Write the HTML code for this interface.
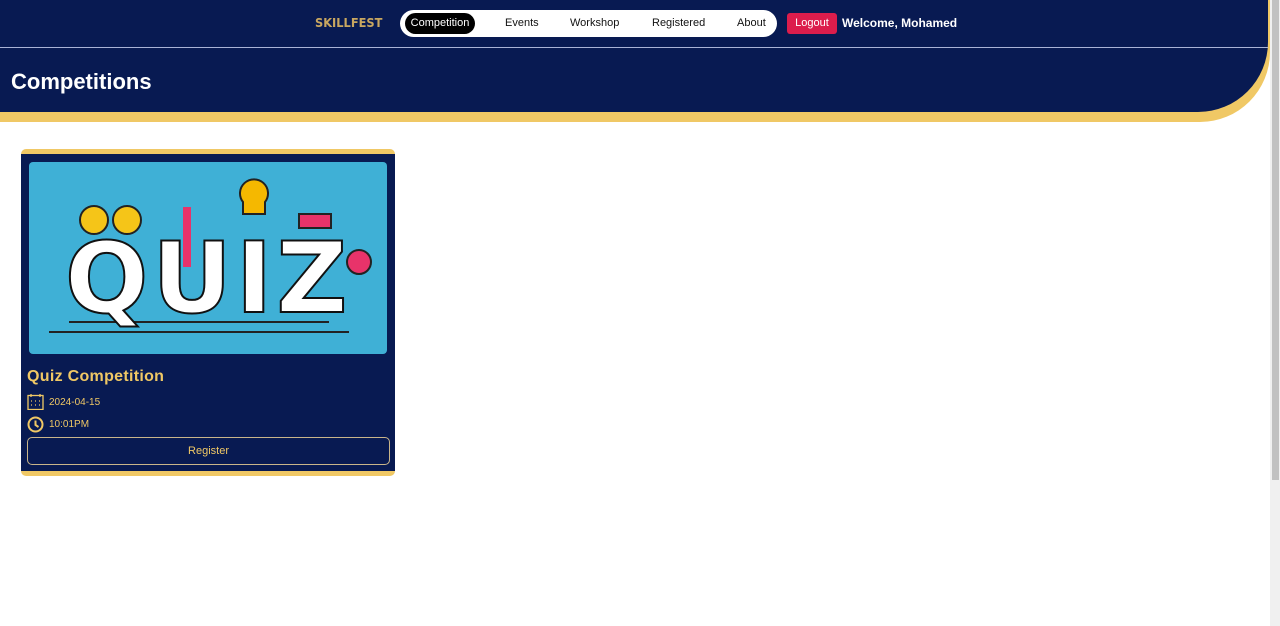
<!DOCTYPE html>
<html><head><meta charset="utf-8"><style>
*{margin:0;padding:0;box-sizing:border-box}
body{width:1280px;height:626px;overflow:hidden;background:#fff;font-family:"Liberation Sans",sans-serif;position:relative}
.scroll{position:absolute;right:0;top:0;width:10px;height:626px;background:#f0f0f0}
.scroll .th{position:absolute;left:2px;top:0;width:7px;height:480px;background:#c1c1c1}
.gold{position:absolute;left:0;top:0;width:1270px;height:122px;background:#f0c865;border-bottom-right-radius:70px}
.hdr{position:absolute;left:0;top:0;width:1268px;height:112px;background:#081a52;border-bottom-right-radius:70px}
.line{position:absolute;left:0;top:47px;width:1268px;height:1px;background:#a9b3d6}
.logo{position:absolute;left:315px;top:16px;color:#c9a760;font-weight:bold;font-size:12px;letter-spacing:0;font-family:"DejaVu Sans",sans-serif;transform:scaleX(0.95);transform-origin:left}
.nav{position:absolute;left:400px;top:10px;width:377px;height:27px;background:#fff;border-radius:14px}
.nav span{position:absolute;top:0;line-height:27px;font-size:11px;color:#111}
.nav .act{left:5px;top:3px;height:21px;width:70px;background:#000;color:#fff;border-radius:11px;text-align:center;line-height:21px;padding:0}
.logout{position:absolute;left:787px;top:13px;width:50px;height:21px;background:#dc1d4c;color:#fff;font-size:11px;border-radius:3px;text-align:center;line-height:21px}
.wel{position:absolute;left:842px;top:16px;color:#fff;font-weight:bold;font-size:12px;line-height:15px}
h1{position:absolute;left:11px;top:68px;color:#fff;font-size:22px;font-weight:bold;line-height:28px}
.card{position:absolute;left:21px;top:149px;width:374px;height:327px;background:#f0c865;border-radius:5px}
.ci{position:absolute;left:0;top:5px;width:374px;height:317px;background:#081a52}
.img{position:absolute;left:8px;top:8px;width:358px;height:192px;background:#3fb0d6;border-radius:4px;overflow:hidden}
.quiz{position:absolute;left:36px;top:60px;font-size:98px;font-weight:bold;color:#fff;font-family:"DejaVu Sans",sans-serif;letter-spacing:4px;-webkit-text-stroke:2px #111}
.title{position:absolute;left:6px;top:214px;color:#f0c865;font-size:16px;font-weight:bold;letter-spacing:0.3px}
.d{position:absolute;left:28px;color:#f0c865;font-size:10px}
.reg{position:absolute;left:6px;top:283px;width:363px;height:28px;border:1px solid #c9b58a;border-radius:5px;color:#f0c865;font-size:11px;text-align:center;line-height:26px}
</style></head><body>
<div class="gold"></div><div class="hdr"></div><div class="line"></div>
<div class="logo">SKILLFEST</div>
<div class="nav"><span class="act">Competition</span><span style="left:105px">Events</span><span style="left:170px">Workshop</span><span style="left:252px">Registered</span><span style="left:337px">About</span></div>
<div class="logout">Logout</div>
<div class="wel">Welcome, Mohamed</div>
<h1>Competitions</h1>
<div class="card"><div class="ci">
<div class="img">
<svg width="358" height="192" style="position:absolute;left:0;top:0" fill="none" stroke="#222" stroke-width="2">
<circle cx="65" cy="58" r="14" fill="#f5c518"/><circle cx="98" cy="58" r="14" fill="#f5c518"/>
<path d="M214 40a14 14 0 1 1 22 0v12h-22z" fill="#f5b800"/>
<rect x="270" y="52" width="32" height="14" fill="#e8336a"/>
<circle cx="330" cy="100" r="12" fill="#e8336a"/>
<path d="M158 45v60" stroke="#e8336a" stroke-width="8"/>
<path d="M20 170h300M40 160h260" />
</svg>
<div class="quiz">QUIZ</div>
</div>
<div class="title">Quiz Competition</div>
<svg style="position:absolute;left:6px;top:239px" width="17" height="17" fill="none" stroke="#f0c865" stroke-width="1.3"><rect x="1" y="2.5" width="15" height="14"/><path d="M4 1v3M13 1v3M4 8h1M8 8h1M12 8h1M4 12h1M8 12h1M12 12h1"/></svg>
<div class="d" style="top:243px">2024-04-15</div>
<svg style="position:absolute;left:6px;top:262px" width="17" height="17" fill="none" stroke="#f0c865" stroke-width="2"><circle cx="8.5" cy="8.5" r="7"/><path d="M8.5 4.5v4.5l3 2"/></svg>
<div class="d" style="top:265px">10:01PM</div>
<div class="reg">Register</div>
</div></div>
<div class="scroll"><div class="th"></div></div>
</body></html>
